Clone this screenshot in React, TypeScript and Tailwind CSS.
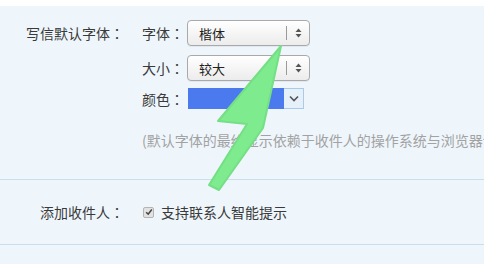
import React from "react";

function Colon() {
  return <span className="font-['Noto_Sans_CJK_JP',sans-serif]">：</span>;
}

function SelectBox({ value }: { value: string }) {
  return (
    <div className="flex h-[26px] w-[123px] items-center rounded-[4px] border border-[#a9a9a9] bg-gradient-to-b from-white to-[#ececec] shadow-[0_1px_0_rgba(0,0,0,0.05)]">
      <span className="flex-1 pl-[11px] text-[13px] leading-none text-[#222]">{value}</span>
      <span className="h-[14px] w-px bg-[#9a9a9a]" />
      <span className="flex w-[22px] justify-center">
        <svg width="7" height="10" viewBox="0 0 7 10">
          <path d="M3.5 0.5 L6.5 4 H0.5 Z" fill="#555" />
          <path d="M3.5 9.5 L6.5 6 H0.5 Z" fill="#555" />
        </svg>
      </span>
    </div>
  );
}

export default function App() {
  return (
    <div className="relative h-[264px] w-[484px] overflow-hidden bg-white font-['Noto_Sans_CJK_SC','Noto_Sans',sans-serif] text-[14px] text-[#3a3a3a]">
      <div className="mt-[6px] h-[258px] bg-[#eef6fc]">
        <div className="flex pt-[14px]">
          <div className="w-[124px] shrink-0 pt-[4px] text-right leading-[18px]">
            写信默认字体<Colon />
          </div>
          <div className="ml-[18px] flex flex-col">
            <div className="flex items-center">
              <span className="w-[45px] leading-[18px]">
                字体<Colon />
              </span>
              <SelectBox value="楷体" />
            </div>
            <div className="mt-[9px] flex items-center">
              <span className="w-[45px] leading-[18px]">
                大小<Colon />
              </span>
              <SelectBox value="较大" />
            </div>
            <div className="mt-[7px] flex items-center">
              <span className="w-[46px] leading-[18px]">
                颜色<Colon />
              </span>
              <div className="flex h-[21px]">
                <div className="w-[96px] bg-[#4b79ee]" />
                <div className="flex w-[20px] items-center justify-center border border-l-0 border-[#a9cbe9] bg-[#e6f0f9]">
                  <svg width="10" height="7" viewBox="0 0 10 7">
                    <path d="M1 1.5 L5 5.5 L9 1.5" stroke="#555" strokeWidth="1.6" fill="none" />
                  </svg>
                </div>
              </div>
            </div>
            <div className="mt-[21px] whitespace-nowrap leading-[20px] text-[#a2a2a2]">
              (默认字体的最终显示依赖于收件人的操作系统与浏览器设置)
            </div>
          </div>
        </div>
        <div className="mt-[29px] h-px bg-[#c9dfee]" />
        <div className="flex items-center py-[22px]">
          <div className="w-[124px] shrink-0 text-right leading-[20px]">
            添加收件人<Colon />
          </div>
          <div className="ml-[19px] flex items-center">
            <span className="flex h-[11px] w-[11px] items-center justify-center rounded-[2px] border border-[#b4b4b4] bg-[#e2e2e2]">
              <svg width="8" height="8" viewBox="0 0 8 8">
                <path d="M1.2 4.2 L3.2 6.2 L6.8 1.5" stroke="#444" strokeWidth="1.5" fill="none" />
              </svg>
            </span>
            <span className="ml-[7px] leading-[20px]">支持联系人智能提示</span>
          </div>
        </div>
        <div className="h-px bg-[#c9dfee]" />
      </div>
      <svg className="pointer-events-none absolute left-0 top-0" width="484" height="264" viewBox="0 0 484 264">
        <path
          d="M281 46 L218 121 L247 124 L209 185 L219 190 L263 128 Z"
          fill="#7eeb8e"
          stroke="#74df85"
          strokeWidth="2"
          strokeLinejoin="round"
        />
      </svg>
    </div>
  );
}
